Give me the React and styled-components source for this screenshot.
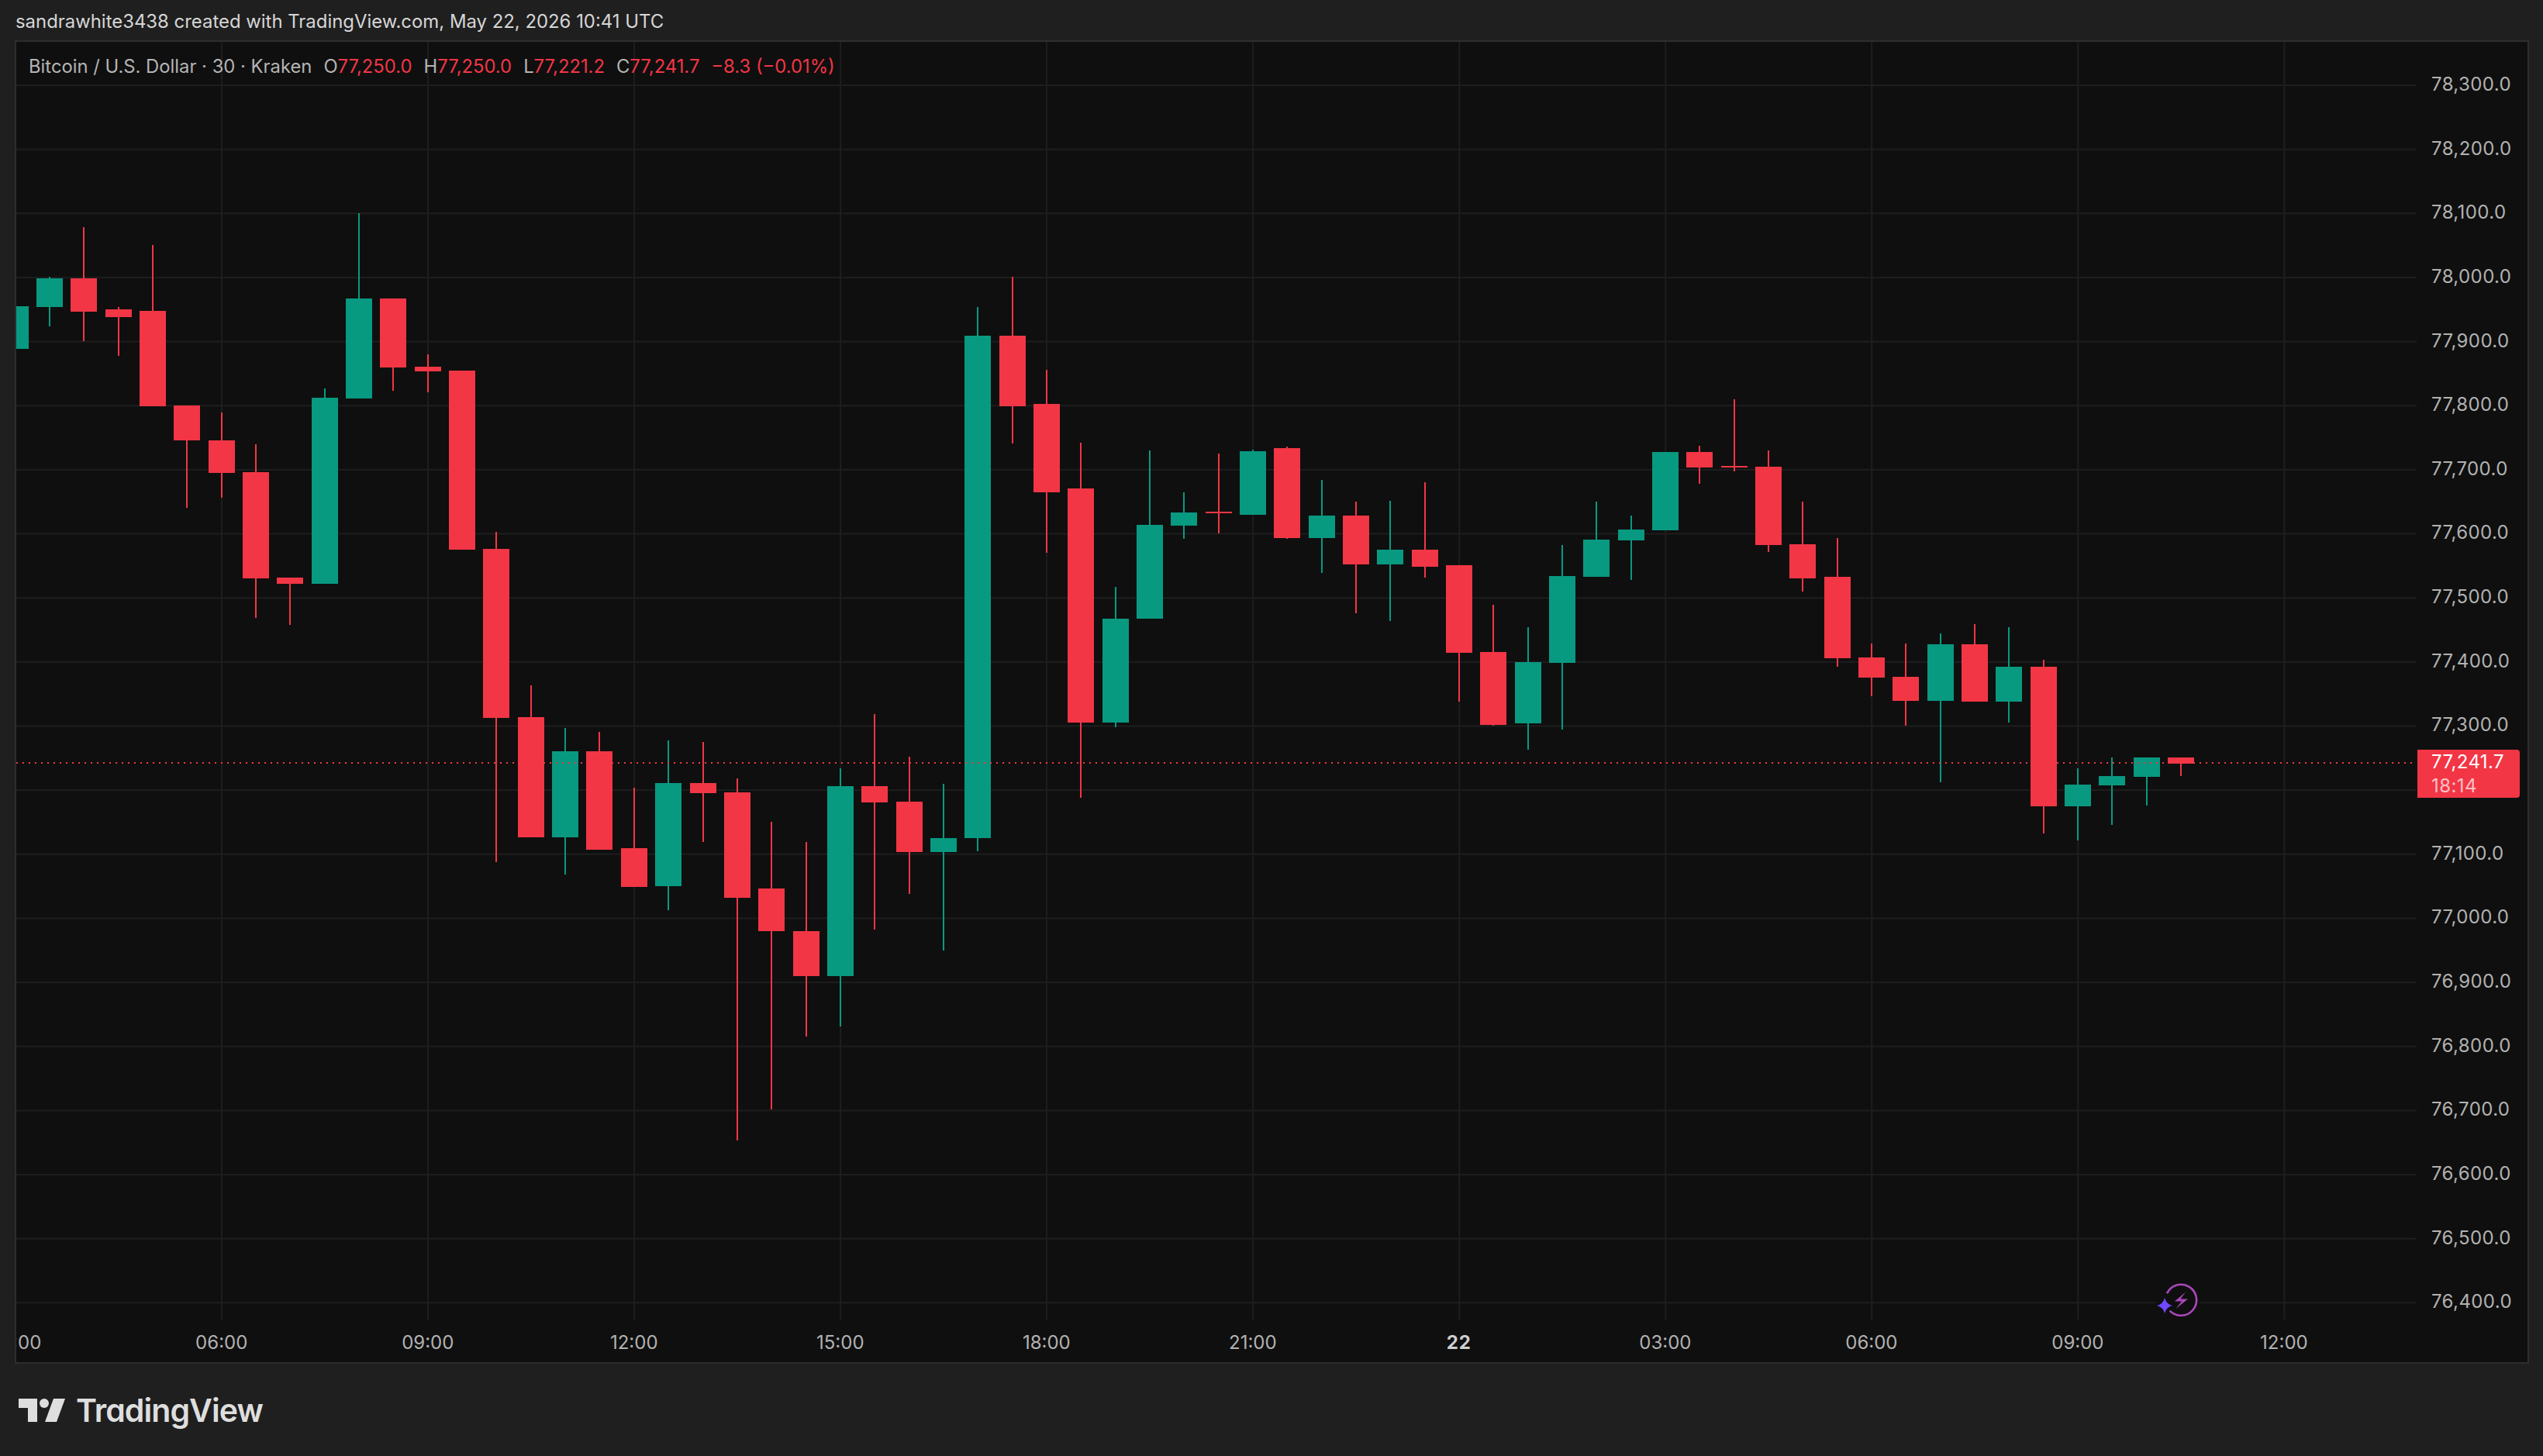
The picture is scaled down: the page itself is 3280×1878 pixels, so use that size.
import React from "react";
import styled, { createGlobalStyle } from "styled-components";

const GRID = "#1e1e1e";
const UP = "#089981";
const DOWN = "#f23645";

// [up, body top, body bottom, wick top, wick bottom] in page pixels
const candles = [
  [1, 395, 450, 395, 492], [1, 359, 396, 357, 421], [0, 359, 402, 293, 440], [0, 399, 409, 396, 459],
  [0, 401, 524, 316, 524], [0, 523, 568, 523, 655], [0, 568, 610, 532, 642], [0, 609, 746, 573, 797],
  [0, 745, 753, 745, 806], [1, 513, 753, 501, 753], [1, 385, 514, 275, 514], [0, 385, 474, 385, 504],
  [0, 473, 479, 457, 506], [0, 478, 709, 478, 709], [0, 708, 926, 686, 1112], [0, 925, 1080, 884, 1080],
  [1, 969, 1080, 939, 1128], [0, 969, 1096, 944, 1096], [0, 1094, 1144, 1016, 1144], [1, 1010, 1143, 955, 1174],
  [0, 1010, 1023, 957, 1086], [0, 1022, 1158, 1004, 1471], [0, 1146, 1201, 1060, 1431], [0, 1201, 1259, 1086, 1337],
  [1, 1014, 1259, 991, 1324], [0, 1014, 1035, 921, 1199], [0, 1034, 1099, 976, 1153], [1, 1081, 1099, 1011, 1226],
  [1, 433, 1081, 396, 1098], [0, 433, 524, 357, 572], [0, 521, 635, 477, 713], [0, 630, 932, 571, 1029],
  [1, 798, 932, 757, 938], [1, 677, 798, 581, 798], [1, 661, 678, 635, 695], [0, 660, 662, 585, 688],
  [1, 582, 664, 580, 664], [0, 578, 694, 576, 695], [1, 665, 694, 619, 739], [0, 665, 728, 647, 791],
  [1, 709, 728, 646, 801], [0, 709, 731, 622, 745], [0, 729, 842, 729, 905], [0, 841, 935, 780, 936],
  [1, 854, 933, 809, 967], [1, 743, 855, 703, 941], [1, 696, 744, 647, 744], [1, 683, 697, 665, 748],
  [1, 583, 684, 583, 684], [0, 583, 603, 575, 624], [0, 601, 603, 515, 608], [0, 602, 703, 581, 712],
  [0, 702, 746, 647, 763], [0, 744, 849, 694, 860], [0, 848, 874, 830, 898], [0, 873, 904, 830, 936],
  [1, 831, 904, 817, 1009], [0, 831, 905, 805, 905], [1, 860, 905, 809, 932], [0, 860, 1040, 851, 1075],
  [1, 1012, 1040, 991, 1084], [1, 1001, 1013, 977, 1064], [1, 977, 1002, 977, 1039], [0, 977, 985, 977, 1001],
];

const prices = [
  "78,300.0", "78,200.0", "78,100.0", "78,000.0", "77,900.0", "77,800.0", "77,700.0",
  "77,600.0", "77,500.0", "77,400.0", "77,300.0", "77,200.0", "77,100.0", "77,000.0",
  "76,900.0", "76,800.0", "76,700.0", "76,600.0", "76,500.0", "76,400.0",
];

const times = ["03:00", "06:00", "09:00", "12:00", "15:00", "18:00", "21:00", "22", "03:00", "06:00", "09:00", "12:00"];

const Global = createGlobalStyle`
  html, body {
    margin: 0;
    background: #1f1f1f;
  }
`;

const Page = styled.div`
  width: 3280px;
  height: 1878px;
  overflow: hidden;
  background: #1f1f1f;
  font-family: Inter, "Liberation Sans", sans-serif;
`;

const Credit = styled.div`
  height: 52px;
  padding: 4px 0 0 20px;
  box-sizing: border-box;
  font-size: 23.9px;
  line-height: 48px;
  color: #d6d6d6;
  white-space: nowrap;
`;

const Frame = styled.div`
  position: relative;
  box-sizing: border-box;
  width: 3243px;
  height: 1707px;
  margin-left: 19px;
  border: 2px solid #2e2e2e;
  background: #0f0f0f;
  display: grid;
  grid-template-columns: 3096px 143px;
  grid-template-rows: 1648px 55px;
`;

const Legend = styled.div`
  position: absolute;
  left: 16px;
  top: 15px;
  display: flex;
  gap: 15px;
  font-size: 23.8px;
  line-height: 34px;
  color: #b4b4b4;
  white-space: nowrap;
`;

const Ohlc = styled.span`
  color: #b4b4b4;
`;

const Red = styled.span`
  color: ${DOWN};
`;

const Plot = styled.svg`
  display: block;
  width: 3096px;
  height: 1648px;
`;

const GridLine = styled.rect`
  fill: ${GRID};
`;

const Wick = styled.rect`
  fill: ${(p) => (p.$up ? UP : DOWN)};
`;

const Body = styled.rect`
  fill: ${(p) => (p.$up ? UP : DOWN)};
`;

const LastPrice = styled.line`
  stroke: ${DOWN};
  stroke-width: 2;
  stroke-dasharray: 2 6;
`;

const PriceAxis = styled.div`
  position: relative;
  padding-top: 14px;
  display: flex;
  flex-direction: column;
  align-items: flex-start;
`;

const PriceLabel = styled.div`
  height: 82.65px;
  line-height: 82.65px;
  padding-left: 19px;
  font-size: 24px;
  letter-spacing: 0.4px;
  color: #b2b2b2;
  flex: none;
`;

const Badge = styled.div`
  position: absolute;
  left: 1px;
  top: 913px;
  width: 132px;
  height: 62px;
  padding-left: 18px;
  box-sizing: border-box;
  border-radius: 0 4px 4px 0;
  background: ${DOWN};
  color: #fff;
  font-size: 24px;
  letter-spacing: 0.4px;
  line-height: 31px;
`;

const Countdown = styled.div`
  color: rgba(255, 255, 255, 0.7);
`;

const TimeAxis = styled.div`
  display: flex;
  overflow: hidden;
  line-height: 59px;
  font-size: 24px;
  color: #b2b2b2;
`;

const Tick = styled.div`
  flex: none;
  width: 266.03px;
  text-align: center;
  font-weight: ${(p) => (p.$bold ? 700 : 400)};
  letter-spacing: ${(p) => (p.$bold ? "1px" : "0")};
  color: ${(p) => (p.$bold ? "#cfcfcf" : "#b2b2b2")};
  &:first-child {
    margin-left: -134.3px;
  }
`;

const Footer = styled.div`
  height: 119px;
  padding-left: 24px;
  display: flex;
  align-items: center;
  gap: 14px;
  color: #dedede;
`;

const Wordmark = styled.div`
  font-size: 41px;
  font-weight: 600;
  font-feature-settings: "cv11";
  letter-spacing: -0.95px;
  line-height: 58px;
`;

const TvLogo = () => (
  <svg width="60" height="30" viewBox="0 0 60 30" fill="currentColor">
    <path d="M0 0H24V30H12V12H0Z" />
    <circle cx="33" cy="6" r="6" />
    <path d="M45 0H60L49 30H34Z" />
  </svg>
);

const App = () => {
  return (
    <Page>
      <Global />
      <Credit>sandrawhite3438 created with TradingView.com, May 22, 2026 10:41 UTC</Credit>
      <Frame>
        <Plot viewBox="21 54 3096 1648">
          {prices.map((p, i) => (
            <GridLine key={p} x="21" y={109 + i * 82.65} width="3096" height="2" />
          ))}
          {times.map((t, i) => (
            <GridLine key={i} x={19 + i * 266.03} y="54" width="2" height="1648" />
          ))}
          {candles.map(([up, top, bottom, hi, lo], i) => {
            const x = Math.round(19.7 + i * 44.34);
            return (
              <g key={i}>
                <Wick $up={up} x={x - 1} y={hi} width="2" height={lo - hi} />
                <Body $up={up} x={x - 17} y={top} width="34" height={bottom - top} />
              </g>
            );
          })}
          <LastPrice x1="21" x2="3112" y1="984" y2="984" />
          <rect x="2781" y="1670" width="56" height="24" fill="#0f0f0f" />
          <path d="M2795 1668.3A20 20 0 1 1 2798.6 1690.6" fill="none" stroke="#ab47bc" strokeWidth="2.6" />
          <path d="M2819 1666.5L2805 1678.5H2814L2806.5 1688L2822 1675.5H2812.5Z" fill="#ab47bc" />
          <path d="M2792 1674Q2794 1682 2802 1684Q2794 1686 2792 1694Q2790 1686 2782 1684Q2790 1682 2792 1674Z" fill="#7048ff" />
        </Plot>
        <PriceAxis>
          {prices.map((p) => (
            // 77,200.0 sits behind the last price badge
            <PriceLabel key={p}>{p === "77,200.0" ? "" : p}</PriceLabel>
          ))}
          <Badge>
            77,241.7
            <Countdown>18:14</Countdown>
          </Badge>
        </PriceAxis>
        <TimeAxis>
          {times.map((t, i) => (
            <Tick key={i} $bold={t === "22"}>{t}</Tick>
          ))}
        </TimeAxis>
        <Legend>
          <span>Bitcoin / U.S. Dollar · 30 · Kraken</span>
          <Ohlc>O<Red>77,250.0</Red></Ohlc>
          <Ohlc>H<Red>77,250.0</Red></Ohlc>
          <Ohlc>L<Red>77,221.2</Red></Ohlc>
          <Ohlc>C<Red>77,241.7</Red></Ohlc>
          <Red>−8.3 (−0.01%)</Red>
        </Legend>
      </Frame>
      <Footer>
        <TvLogo />
        <Wordmark>TradingView</Wordmark>
      </Footer>
    </Page>
  );
};

export default App;
